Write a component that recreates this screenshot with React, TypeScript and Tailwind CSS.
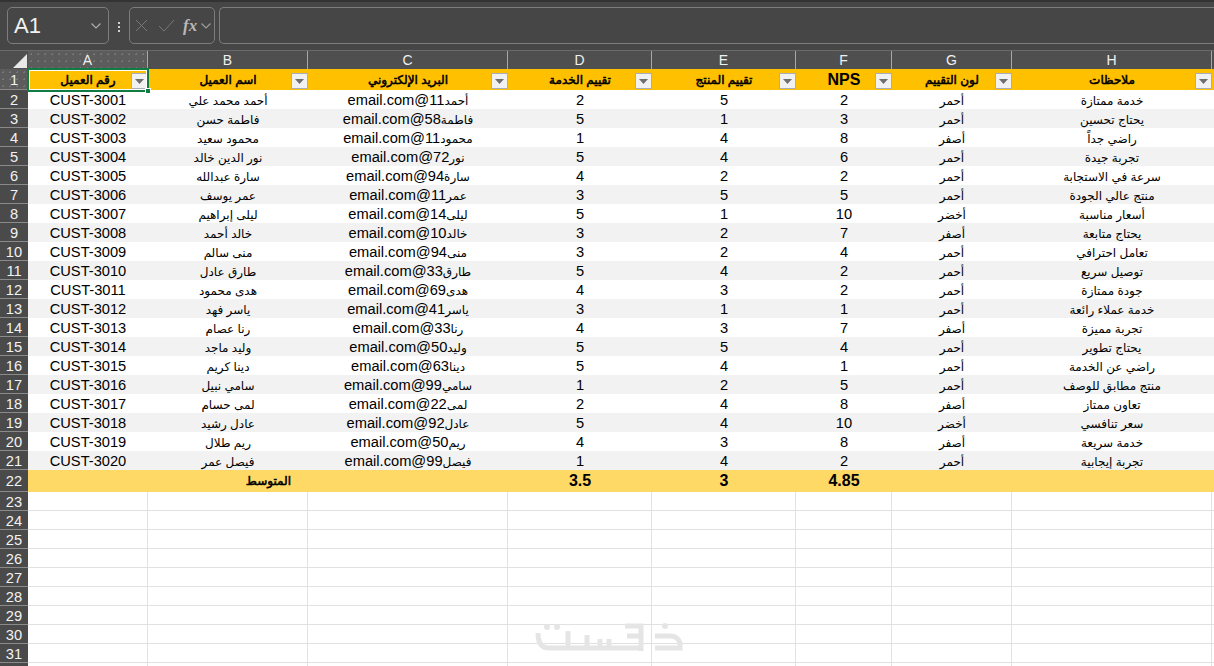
const gridCols =
  'grid grid-rows-[100%] grid-cols-[28px_120px_160px_200px_144px_144px_96px_120px_200px_2px]';

const columns = ['A', 'B', 'C', 'D', 'E', 'F', 'G', 'H'];

const headers = [
  'رقم العميل',
  'اسم العميل',
  'البريد الإلكتروني',
  'تقييم الخدمة',
  'تقييم المنتج',
  'NPS',
  'لون التقييم',
  'ملاحظات',
];

const rows: [string, string, string, string, number, number, number, string, string][] = [
  ['CUST-3001', 'أحمد محمد علي', 'أحمد', '11', 2, 5, 2, 'أحمر', 'خدمة ممتازة'],
  ['CUST-3002', 'فاطمة حسن', 'فاطمة', '58', 5, 1, 3, 'أحمر', 'يحتاج تحسين'],
  ['CUST-3003', 'محمود سعيد', 'محمود', '11', 1, 4, 8, 'أصفر', 'راضي جداً'],
  ['CUST-3004', 'نور الدين خالد', 'نور', '72', 5, 4, 6, 'أحمر', 'تجربة جيدة'],
  ['CUST-3005', 'سارة عبدالله', 'سارة', '94', 4, 2, 2, 'أحمر', 'سرعة في الاستجابة'],
  ['CUST-3006', 'عمر يوسف', 'عمر', '11', 3, 5, 5, 'أحمر', 'منتج عالي الجودة'],
  ['CUST-3007', 'ليلى إبراهيم', 'ليلى', '14', 5, 1, 10, 'أخضر', 'أسعار مناسبة'],
  ['CUST-3008', 'خالد أحمد', 'خالد', '10', 3, 2, 7, 'أصفر', 'يحتاج متابعة'],
  ['CUST-3009', 'منى سالم', 'منى', '94', 3, 2, 4, 'أحمر', 'تعامل احترافي'],
  ['CUST-3010', 'طارق عادل', 'طارق', '33', 5, 4, 2, 'أحمر', 'توصيل سريع'],
  ['CUST-3011', 'هدى محمود', 'هدى', '69', 4, 3, 2, 'أحمر', 'جودة ممتازة'],
  ['CUST-3012', 'ياسر فهد', 'ياسر', '41', 3, 1, 1, 'أحمر', 'خدمة عملاء رائعة'],
  ['CUST-3013', 'رنا عصام', 'رنا', '33', 4, 3, 7, 'أصفر', 'تجربة مميزة'],
  ['CUST-3014', 'وليد ماجد', 'وليد', '50', 5, 5, 4, 'أحمر', 'يحتاج تطوير'],
  ['CUST-3015', 'دينا كريم', 'دينا', '63', 5, 4, 1, 'أحمر', 'راضي عن الخدمة'],
  ['CUST-3016', 'سامي نبيل', 'سامي', '99', 1, 2, 5, 'أحمر', 'منتج مطابق للوصف'],
  ['CUST-3017', 'لمى حسام', 'لمى', '22', 2, 4, 8, 'أصفر', 'تعاون ممتاز'],
  ['CUST-3018', 'عادل رشيد', 'عادل', '92', 5, 4, 10, 'أخضر', 'سعر تنافسي'],
  ['CUST-3019', 'ريم طلال', 'ريم', '50', 4, 3, 8, 'أصفر', 'خدمة سريعة'],
  ['CUST-3020', 'فيصل عمر', 'فيصل', '99', 1, 4, 2, 'أحمر', 'تجربة إيجابية'],
];

function Chevron({ color = '#b0b0b0' }: { color?: string }) {
  return (
    <svg width="10" height="6" viewBox="0 0 10 6" fill="none">
      <path d="M0.5 0.5 L5 5 L9.5 0.5" stroke={color} strokeWidth="1.1" />
    </svg>
  );
}

function FilterButton() {
  return (
    <span className="absolute right-0 top-[4px] flex h-[16px] w-[17px] items-center justify-center border border-[#a9adb5] bg-[#f1f1f1]">
      <svg width="9" height="5" viewBox="0 0 9 5">
        <path d="M0 0 H9 L4.5 5 Z" fill="#6e6e6e" />
      </svg>
    </span>
  );
}

function RowHead({ n, active }: { n?: number; active?: boolean }) {
  return (
    <div
      className={`flex items-center justify-center border-b border-[#8a8a8a] pt-[2px] text-[14.67px] font-normal text-[#f2f2f2] ${
        active
          ? 'bg-[#5c5c5c] bg-[radial-gradient(#787878_1px,transparent_1px)] bg-[length:7px_7px]'
          : 'bg-[#4a4a4a]'
      }`}
    >
      {n}
    </div>
  );
}

function Cell({ odd, children, dir }: { odd: boolean; children: React.ReactNode; dir?: 'rtl' }) {
  return (
    <div
      dir={dir}
      className={`overflow-hidden whitespace-nowrap text-center leading-[20px] ${
        odd ? 'bg-[#f2f2f2]' : 'bg-white'
      }`}
    >
      {children}
    </div>
  );
}

function Watermark() {
  return (
    <svg
      className="absolute left-[525px] top-[615px]"
      width="160"
      height="51"
      viewBox="0 0 160 51"
      fill="none"
      stroke="#e5e5e5"
      strokeWidth="5"
    >
      <path d="M13 18 Q13 33 24 33 H118" />
      <path d="M43 16 V33" />
      <path d="M62 20 V33" />
      <path d="M75 24 V33" />
      <path d="M84 24 V33" />
      <path d="M100 11 H116 V36" />
      <path d="M102 21 H114" />
      <path d="M130 33 H155 V28 Q153 21 145 21 H130" />
      <circle cx="22" cy="12" r="3" fill="#e5e5e5" stroke="none" />
      <circle cx="32" cy="12" r="3" fill="#e5e5e5" stroke="none" />
      <circle cx="140" cy="11" r="3" fill="#e5e5e5" stroke="none" />
    </svg>
  );
}

export default function App() {
  const emptyRows = [23, 24, 25, 26, 27, 28, 29, 30, 31];
  const arabic = 'text-[12px]';
  const arabicBold = 'text-[12px] [-webkit-text-stroke:0.55px_#000]';

  return (
    <div className="relative h-[666px] w-[1214px] overflow-hidden bg-white font-['Liberation_Sans','DejaVu_Sans',sans-serif] text-[14.67px] leading-none text-black">
      {/* Formula bar */}
      <div className="flex h-[50px] items-start border-t-2 border-[#333333] bg-[#464646] pt-[5px]">
        <div className="ml-[7px] flex h-[37px] w-[102px] items-center justify-between rounded-[5px] border border-[#7d7d7d] pl-[6px] pr-[7px]">
          <span className="text-[22px] text-[#f2f2f2]">A1</span>
          <Chevron />
        </div>
        <div className="ml-[9px] mr-[9px] mt-[15px] flex flex-col gap-[2px]">
          <span className="h-[2px] w-[2px] bg-[#d0d0d0]" />
          <span className="h-[2px] w-[2px] bg-[#d0d0d0]" />
          <span className="h-[2px] w-[2px] bg-[#d0d0d0]" />
        </div>
        <div className="flex h-[37px] w-[86px] items-center rounded-[5px] border border-[#7d7d7d] pl-[5px]">
          <svg width="13" height="13" viewBox="0 0 13 13" fill="none">
            <path d="M1 1 L12 12 M12 1 L1 12" stroke="#787878" strokeWidth="1" />
          </svg>
          <svg className="ml-[10px]" width="17" height="13" viewBox="0 0 17 13" fill="none">
            <path d="M1 7 L6 12 L16 1" stroke="#787878" strokeWidth="1" />
          </svg>
          <span className="ml-[8px] font-['Liberation_Serif',serif] text-[17px] font-bold italic text-[#b8b8b8]">
            fx
          </span>
          <span className="ml-[4px]">
            <Chevron color="#a0a0a0" />
          </span>
        </div>
        <div className="ml-[4px] h-[37px] flex-1 rounded-l-[5px] border-y border-l border-[#7d7d7d]" />
      </div>

      {/* Column headers */}
      <div className={`${gridCols} h-[19px] border-t border-[#6a6a6a] bg-[#4f4f4f] text-[14px] text-[#f0f0f0]`}>
        <div className="flex items-end justify-end pb-[1px] pr-[1px]">
          <svg width="14" height="14" viewBox="0 0 14 14">
            <path d="M14 0 V14 H0 Z" fill="#e8e8e8" />
          </svg>
        </div>
        {columns.map((c, i) => (
          <div
            key={c}
            className={`flex items-center justify-center border-r border-[#a8a8a8] ${
              i === 0
                ? 'bg-[#5c5c5c] bg-[radial-gradient(#787878_1px,transparent_1px)] bg-[length:7px_7px]'
                : ''
            }`}
          >
            {c}
          </div>
        ))}
        <div />
      </div>

      {/* Header row */}
      <div className={`${gridCols} h-[21px]`}>
        <RowHead n={1} active />
        {headers.map((h) => (
          <div
            key={h}
            className={`relative flex items-center justify-center bg-[#ffc000] ${
              h === 'NPS' ? 'text-[16px] font-bold' : arabicBold
            }`}
          >
            {h}
            <FilterButton />
          </div>
        ))}
        <div className="bg-[#ffc000]" />
      </div>

      {/* Data rows */}
      {rows.map((r, i) => {
        const odd = i % 2 === 1;
        return (
          <div key={r[0]} className={`${gridCols} h-[19px]`}>
            <RowHead n={i + 2} />
            <Cell odd={odd}>{r[0]}</Cell>
            <Cell odd={odd}>
              <span className={arabic}>{r[1]}</span>
            </Cell>
            <Cell odd={odd} dir="rtl">
              <span className={arabic}>{r[2]}</span>
              {r[3]}@email.com
            </Cell>
            <Cell odd={odd}>{r[4]}</Cell>
            <Cell odd={odd}>{r[5]}</Cell>
            <Cell odd={odd}>{r[6]}</Cell>
            <Cell odd={odd}>
              <span className={arabic}>{r[7]}</span>
            </Cell>
            <Cell odd={odd}>
              <span className={arabic}>{r[8]}</span>
            </Cell>
            <div className={odd ? 'bg-[#f2f2f2]' : 'bg-white'} />
          </div>
        );
      })}

      {/* Average row */}
      <div className={`${gridCols} h-[22px]`}>
        <RowHead n={22} />
        <div className="bg-[#ffd966]" />
        <div className={`flex items-center justify-end bg-[#ffd966] pr-[17px] ${arabicBold}`}>المتوسط</div>
        <div className="bg-[#ffd966]" />
        <div className="flex items-center justify-center bg-[#ffd966] text-[16px] font-bold">3.5</div>
        <div className="flex items-center justify-center bg-[#ffd966] text-[16px] font-bold">3</div>
        <div className="flex items-center justify-center bg-[#ffd966] text-[16px] font-bold">4.85</div>
        <div className="bg-[#ffd966]" />
        <div className="bg-[#ffd966]" />
        <div className="bg-[#ffd966]" />
      </div>

      {/* Empty rows */}
      {emptyRows.map((n) => (
        <div key={n} className={`${gridCols} h-[19px]`}>
          <RowHead n={n} />
          {columns.map((c) => (
            <div key={c} className="border-b border-r border-[#e1e1e1]" />
          ))}
          <div className="border-b border-[#e1e1e1]" />
        </div>
      ))}
      <div className={`${gridCols} h-[19px]`}>
        <RowHead />
        {columns.map((c) => (
          <div key={c} className="border-r border-[#e1e1e1]" />
        ))}
      </div>

      {/* Selected cell */}
      <div className="absolute left-[27px] top-[68px] h-[24px] w-[122px] border-2 border-[#107c41]">
        <div className="h-full w-full border border-white" />
        <div className="absolute -bottom-[4px] -right-[4px] h-[6px] w-[6px] border border-white bg-[#107c41]" />
      </div>

      <Watermark />
    </div>
  );
}
